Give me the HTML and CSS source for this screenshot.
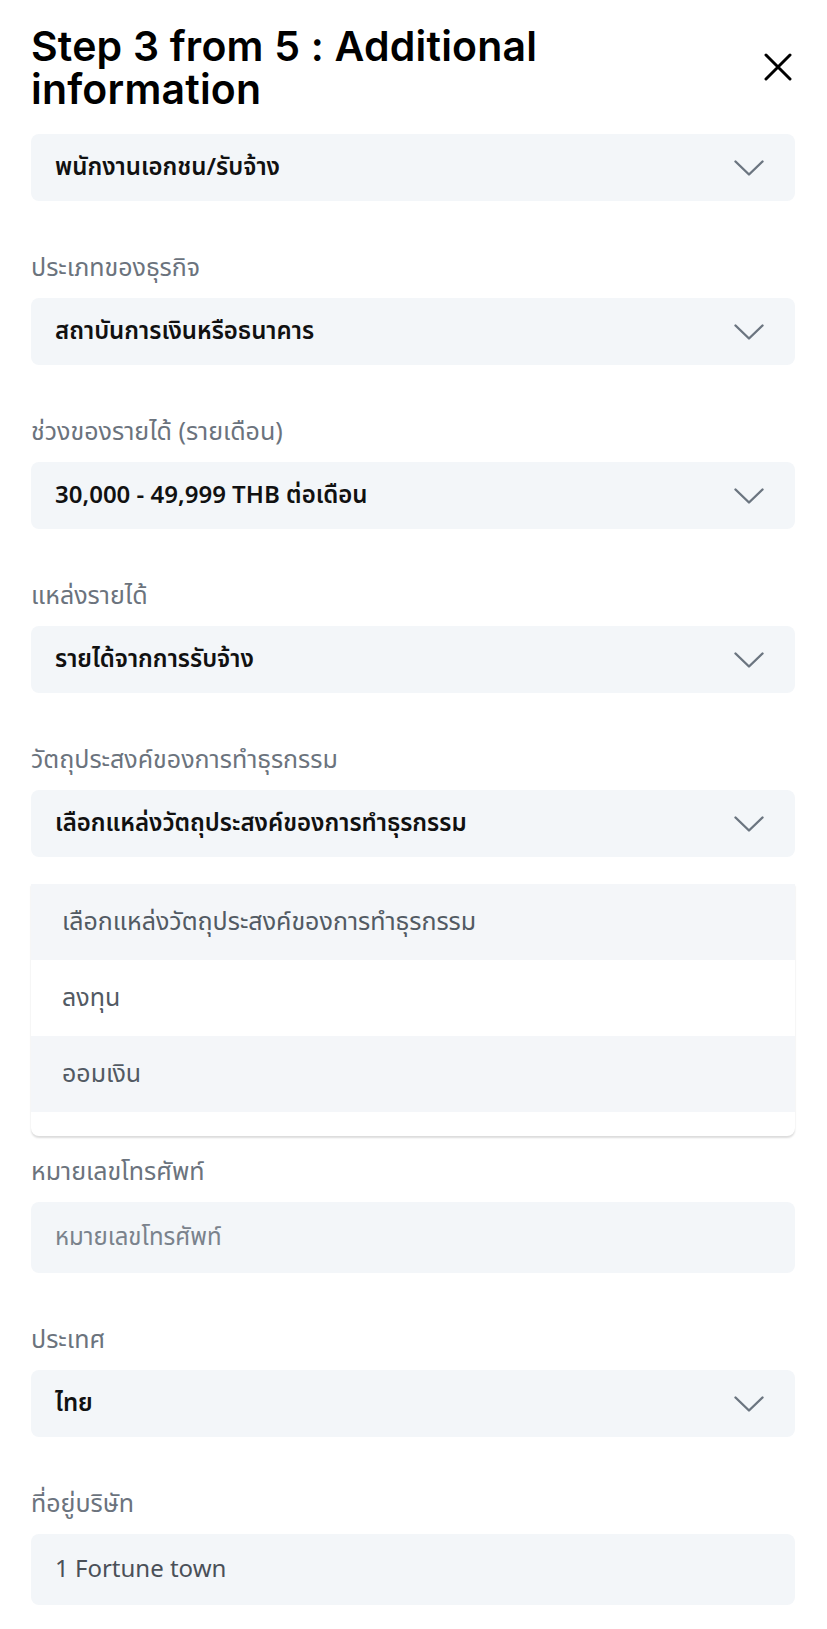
FILE: index.html
```html
<!DOCTYPE html>
<html lang="th">
<head>
  <meta charset="UTF-8">
  <meta name="viewport" content="width=device-width, initial-scale=1.0">
  <title>Additional information</title>
  <link rel="stylesheet" href="styles.css">
</head>
<body>
  <div class="sheet">
    <div class="sheet-head">
      <h1>Step 3 from 5 : Additional information</h1>
      <button class="close-btn" aria-label="close">
        <svg width="28" height="28" viewBox="0 0 28 28"><path d="M2 2 L26 26 M26 2 L2 26" stroke="#000" stroke-width="3" stroke-linecap="round"/></svg>
      </button>
    </div>

    <div class="field">
      <div class="select">
        <span>พนักงานเอกชน/รับจ้าง</span>
        <svg class="chev" width="30" height="16" viewBox="0 0 30 16"><path d="M1.5 1.5 L15 14.5 L28.5 1.5" fill="none" stroke="#6b7580" stroke-width="2.4" stroke-linecap="round" stroke-linejoin="round"/></svg>
      </div>
    </div>

    <div class="field">
      <label>ประเภทของธุรกิจ</label>
      <div class="select">
        <span>สถาบันการเงินหรือธนาคาร</span>
        <svg class="chev" width="30" height="16" viewBox="0 0 30 16"><path d="M1.5 1.5 L15 14.5 L28.5 1.5" fill="none" stroke="#6b7580" stroke-width="2.4" stroke-linecap="round" stroke-linejoin="round"/></svg>
      </div>
    </div>

    <div class="field">
      <label>ช่วงของรายได้ (รายเดือน)</label>
      <div class="select">
        <span>30,000 - 49,999 THB ต่อเดือน</span>
        <svg class="chev" width="30" height="16" viewBox="0 0 30 16"><path d="M1.5 1.5 L15 14.5 L28.5 1.5" fill="none" stroke="#6b7580" stroke-width="2.4" stroke-linecap="round" stroke-linejoin="round"/></svg>
      </div>
    </div>

    <div class="field">
      <label>แหล่งรายได้</label>
      <div class="select">
        <span>รายได้จากการรับจ้าง</span>
        <svg class="chev" width="30" height="16" viewBox="0 0 30 16"><path d="M1.5 1.5 L15 14.5 L28.5 1.5" fill="none" stroke="#6b7580" stroke-width="2.4" stroke-linecap="round" stroke-linejoin="round"/></svg>
      </div>
    </div>

    <div class="field field-open">
      <label>วัตถุประสงค์ของการทำธุรกรรม</label>
      <div class="select">
        <span>เลือกแหล่งวัตถุประสงค์ของการทำธุรกรรม</span>
        <svg class="chev" width="30" height="16" viewBox="0 0 30 16"><path d="M1.5 1.5 L15 14.5 L28.5 1.5" fill="none" stroke="#6b7580" stroke-width="2.4" stroke-linecap="round" stroke-linejoin="round"/></svg>
      </div>
      <ul class="options">
        <li class="shade">เลือกแหล่งวัตถุประสงค์ของการทำธุรกรรม</li>
        <li>ลงทุน</li>
        <li class="shade">ออมเงิน</li>
      </ul>
    </div>

    <div class="field">
      <label>หมายเลขโทรศัพท์</label>
      <div class="input placeholder">หมายเลขโทรศัพท์</div>
    </div>

    <div class="field">
      <label>ประเทศ</label>
      <div class="select">
        <span>ไทย</span>
        <svg class="chev" width="30" height="16" viewBox="0 0 30 16"><path d="M1.5 1.5 L15 14.5 L28.5 1.5" fill="none" stroke="#6b7580" stroke-width="2.4" stroke-linecap="round" stroke-linejoin="round"/></svg>
      </div>
    </div>

    <div class="field">
      <label>ที่อยู่บริษัท</label>
      <div class="input">1 Fortune town</div>
    </div>
  </div>
</body>
</html>
```

FILE: styles.css
```css
body {
  margin: 0;
  background: #ffffff;
  font-family: "Noto Sans Thai", "Noto Sans", sans-serif;
}

.sheet {
  padding: 25px 32px 0 31px;
}

.sheet-head {
  display: flex;
  justify-content: space-between;
  align-items: center;
  margin-bottom: 23px;
}

.sheet-head h1 {
  margin: 0;
  max-width: 640px;
  font-family: "Inter", sans-serif;
  font-weight: 600;
  font-size: 41px;
  line-height: 43px;
  letter-spacing: 0.2px;
  color: #000000;
}

.close-btn {
  border: none;
  background: none;
  padding: 0;
  margin-right: 3px;
  cursor: pointer;
}

.field {
  margin-bottom: 52px;
}

.field label {
  display: block;
  font-size: 25px;
  line-height: 30px;
  color: #6b737d;
  margin-bottom: 15px;
}

.select {
  display: flex;
  justify-content: space-between;
  align-items: center;
  height: 67px;
  padding: 0 31px 0 24px;
  background-color: #f3f6f9;
  border-radius: 8px;
  font-size: 24px;
  font-weight: 600;
  color: #111111;
}

.input {
  display: flex;
  align-items: center;
  height: 71px;
  padding: 0 24px;
  background-color: #f3f6f9;
  border-radius: 8px;
  font-size: 24px;
  color: #4a5058;
}

.input.placeholder {
  color: #7a828c;
}

.field-open {
  margin-bottom: 21px;
}

.options {
  list-style: none;
  margin: 27px 0 0;
  padding: 0 0 24px;
  background: #ffffff;
  border-radius: 0 0 8px 8px;
  box-shadow: 0 2px 2px rgba(0, 0, 0, 0.14);
}

.options li {
  display: flex;
  align-items: center;
  height: 76px;
  padding: 0 31px;
  font-size: 25px;
  color: #525a63;
}

.options li.shade {
  background-color: #f4f6f9;
}
```
